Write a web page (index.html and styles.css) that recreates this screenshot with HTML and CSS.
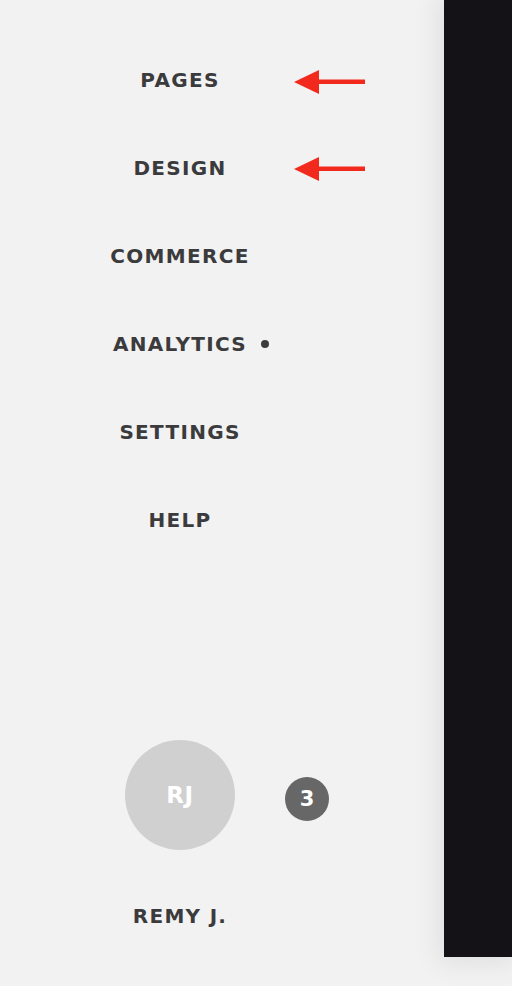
FILE: index.html
```html
<!DOCTYPE html>
<html>
<head>
<meta charset="utf-8">
<link rel="stylesheet" href="styles.css">
</head>
<body>
<div class="app">
  <aside class="sidebar">
    <nav class="nav">
      <a class="nav-item">PAGES</a>
      <a class="nav-item">DESIGN</a>
      <a class="nav-item">COMMERCE</a>
      <a class="nav-item"><span class="dot-wrap">ANALYTICS<span class="dot"></span></span></a>
      <a class="nav-item">SETTINGS</a>
      <a class="nav-item">HELP</a>
    </nav>
    <div class="user">
      <div class="avatar-row">
        <div class="avatar">RJ</div>
        <div class="badge">3</div>
      </div>
      <div class="username">REMY J.</div>
    </div>
  </aside>
  <main class="preview"></main>
</div>
<svg class="arrow arrow-1" width="76" height="28" viewBox="0 0 76 28"><path d="M24 9.5 H71 V14 H24 Z" fill="#f22a1d"/><path d="M0 12 L25 0 L25 24 Z" fill="#f22a1d"/></svg>
<svg class="arrow arrow-2" width="76" height="28" viewBox="0 0 76 28"><path d="M24 9.5 H71 V14 H24 Z" fill="#f22a1d"/><path d="M0 12 L25 0 L25 24 Z" fill="#f22a1d"/></svg>
</body>
</html>
```
FILE: styles.css
```css
html, body {
  margin: 0;
  padding: 0;
  width: 512px;
  height: 986px;
  overflow: hidden;
  background: #f2f2f2;
  font-family: "DejaVu Sans", "Liberation Sans", sans-serif;
}
.app {
  display: flex;
  width: 512px;
  height: 986px;
  position: relative;
}
.sidebar {
  width: 360px;
  display: flex;
  flex-direction: column;
  align-items: center;
  padding-top: 36px;
}
.nav {
  display: flex;
  flex-direction: column;
  align-items: center;
}
.nav-item {
  height: 88px;
  display: flex;
  align-items: center;
  justify-content: center;
  font-size: 20px;
  font-weight: 700;
  letter-spacing: 1.3px;
  color: #3b3b3d;
}
.dot-wrap {
  position: relative;
}
.dot {
  position: absolute;
  right: -22px;
  top: 50%;
  margin-top: -4px;
  width: 8px;
  height: 8px;
  border-radius: 50%;
  background: #3b3b3d;
}
.user {
  margin-top: 176px;
  display: flex;
  flex-direction: column;
  align-items: center;
}
.avatar-row {
  position: relative;
  width: 110px;
  height: 110px;
}
.avatar {
  width: 110px;
  height: 110px;
  border-radius: 50%;
  background: #d0d0d0;
  color: #fff;
  display: flex;
  align-items: center;
  justify-content: center;
  font-size: 23px;
  font-weight: 700;
  letter-spacing: 0.5px;
}
.badge {
  position: absolute;
  left: 160px;
  top: 37px;
  width: 44px;
  height: 44px;
  border-radius: 50%;
  background: #676767;
  color: #fff;
  display: flex;
  align-items: center;
  justify-content: center;
  font-size: 21px;
  font-weight: 700;
}
.username {
  margin-top: 54px;
  font-size: 20px;
  font-weight: 700;
  letter-spacing: 1.3px;
  color: #3b3b3d;
}
.preview {
  position: absolute;
  left: 444px;
  top: 0;
  width: 68px;
  height: 957px;
  background: #141216;
  box-shadow: 0 0 28px 6px rgba(0, 0, 0, 0.08);
}
.arrow {
  position: absolute;
  left: 294px;
}
.arrow-1 { top: 70px; }
.arrow-2 { top: 157px; }
```
